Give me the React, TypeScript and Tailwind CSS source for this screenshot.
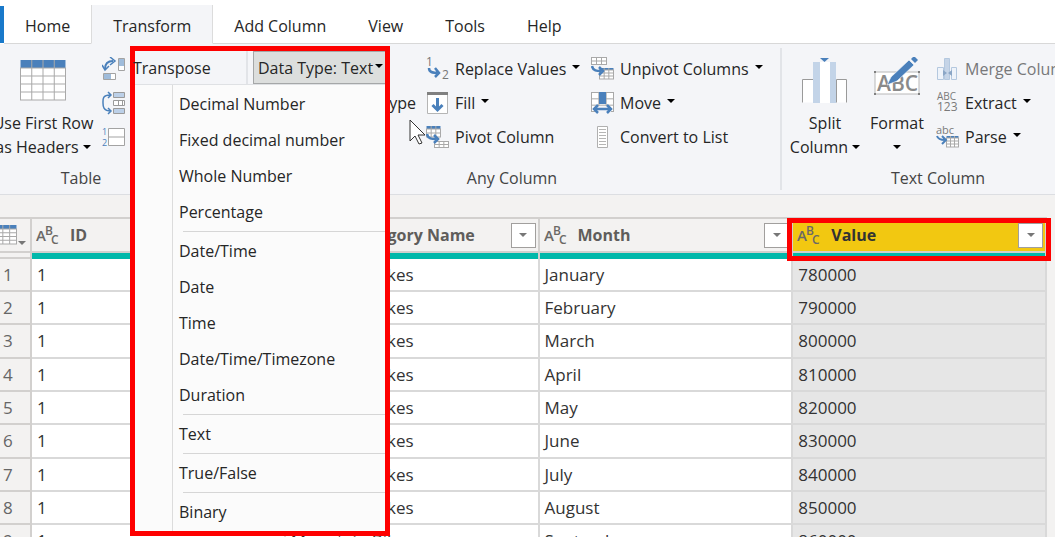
import { useState, type ReactNode } from 'react'
import clsx from 'clsx'

const tabs = ['Home', 'Transform', 'Add Column', 'View', 'Tools', 'Help']

const typeGroups = [
  ['Decimal Number', 'Fixed decimal number', 'Whole Number', 'Percentage'],
  ['Date/Time', 'Date', 'Time', 'Date/Time/Timezone', 'Duration'],
  ['Text'],
  ['True/False'],
  ['Binary'],
]

const rows = [
  ['January', '780000'],
  ['February', '790000'],
  ['March', '800000'],
  ['April', '810000'],
  ['May', '820000'],
  ['June', '830000'],
  ['July', '840000'],
  ['August', '850000'],
  ['September', '860000'],
]

function Caret({ className }: { className?: string }) {
  return (
    <svg className={clsx('inline-block h-1 w-2 shrink-0 align-middle', className)} viewBox="0 0 8 4" fill="currentColor" aria-hidden="true">
      <path d="M0 0h8L4 4z" />
    </svg>
  )
}

function Grid({ x, y, w, h, cols, lines, header }: { x: number; y: number; w: number; h: number; cols: number; lines: number; header?: number }) {
  const vertical = Array.from({ length: cols - 1 }, (_, i) => x + (w * (i + 1)) / cols)
  const top = header ?? 0
  const horizontal = Array.from({ length: lines - 1 }, (_, i) => y + top + ((h - top) * (i + 1)) / lines)
  return (
    <g>
      <rect x={x} y={y} width={w} height={h} fill="#fff" />
      {header && <rect x={x} y={y} width={w} height={header} fill="#4a80bb" />}
      <g stroke="#a9a9a9" fill="none">
        {vertical.map((v) => <path key={v} d={`M${v} ${y}V${y + h}`} />)}
        {horizontal.map((v) => <path key={v} d={`M${x} ${v}H${x + w}`} />)}
        <rect x={x} y={y + top} width={w} height={h - top} />
      </g>
    </g>
  )
}

function HeadersIcon() {
  return (
    <svg width="46" height="42" viewBox="0 0 46 42" aria-hidden="true">
      <Grid x={0.5} y={1} w={45} h={40} cols={4} lines={4} header={8} />
    </svg>
  )
}

function TransposeIcon() {
  return (
    <svg width="24" height="24" viewBox="0 0 24 24" fill="none" aria-hidden="true">
      <path d="M3 12C3 7 6 4 11 4" stroke="#4a80bb" strokeWidth="2" />
      <path d="M8 0l5 4-5 4M0 8l3 5 4-4" stroke="#4a80bb" strokeWidth="1.5" />
      <path d="M16.500 1.500h6v12h-6zM1.500 16.500h12v6h-12z" fill="#fff" stroke="#a3a3a3" />
      <path d="M17 2h5v7h-5zM2 17h7v5H2z" fill="#9fbcdb" />
    </svg>
  )
}

function ReverseIcon() {
  return (
    <svg width="24" height="24" viewBox="0 0 24 24" fill="none" aria-hidden="true">
      <path d="M8 4C0 4 1 9 1 12s0 8 8 8M6 1l3 3-3 3M6 17l3 3-3 3" stroke="#4a80bb" strokeWidth="1.500" />
      <path d="M11.500 1.500h11v5h-11zM11.500 17.500h11v5h-11z" fill="#bcd0e8" stroke="#9a9a9a" />
      <path d="M11.500 9.500h11v5h-11zM16.500 9.500v5M20.500 9.500v5" fill="#fff" stroke="#9a9a9a" />
    </svg>
  )
}

function CountIcon() {
  return (
    <svg width="24" height="24" viewBox="0 0 24 24" aria-hidden="true">
      <text x="0" y="10" fontSize="9" fill="#4a80bb">1</text>
      <text x="0" y="21" fontSize="9" fill="#4a80bb">2</text>
      <path d="M6.500 3.500h16v17h-16zM6.500 12h16" fill="#fff" stroke="#a3a3a3" />
    </svg>
  )
}

function ReplaceIcon() {
  return (
    <svg width="24" height="24" viewBox="0 0 24 24" fill="none" aria-hidden="true">
      <text x="0" y="9" fontSize="12" fill="#777">1</text>
      <text x="16" y="22" fontSize="12" fill="#777">2</text>
      <path d="M3 11c0 4 3 5 10 5M9 11l4 5-4 4" stroke="#4a80bb" strokeWidth="2.500" />
    </svg>
  )
}

function FillIcon() {
  return (
    <svg width="24" height="24" viewBox="0 0 24 24" fill="none" aria-hidden="true">
      <path d="M1.500 1.500h20v21h-20z" fill="#fff" stroke="#b5b5b5" />
      <path d="M1 1h21v3H1z" fill="#808080" />
      <path d="M11.500 7v12M6.500 14l5 5 5-5" stroke="#4a80bb" strokeWidth="3" />
    </svg>
  )
}

function PivotIcon() {
  return (
    <svg width="24" height="24" viewBox="0 0 24 24" fill="none" aria-hidden="true">
      <Grid x={0.5} y={1} w={14} h={11} cols={3} lines={2} header={3} />
      <Grid x={8.5} y={16.5} w={14} h={6} cols={3} lines={2} />
      <path d="M1 9c1 5 5 5 9 5M8 10l4 4-4 4" stroke="#4a80bb" strokeWidth="2.500" />
    </svg>
  )
}

function UnpivotIcon() {
  return (
    <svg width="24" height="24" viewBox="0 0 24 24" fill="none" aria-hidden="true">
      <Grid x={0.5} y={0.5} w={15} h={7} cols={3} lines={2} />
      <Grid x={8.500} y={11} w={14} h={11} cols={3} lines={3} header={2} />
      <path d="M1 9c1 5 5 5 9 5M8 10l4 4-4 4" stroke="#4a80bb" strokeWidth="2.500" />
    </svg>
  )
}

function MoveIcon() {
  return (
    <svg width="24" height="24" viewBox="0 0 24 24" fill="none" aria-hidden="true">
      <Grid x={0.5} y={1.500} w={22} h={19} cols={3} lines={3} />
      <path d="M8 1h7v12H8z" fill="#4a80bb" />
      <path d="M4 18h16" stroke="#f4f5f8" strokeWidth="6" />
      <path d="M3 18h17M7 14l-4 4 4 4M16 14l4 4-4 4" stroke="#4a80bb" strokeWidth="2.500" />
    </svg>
  )
}

function ListIcon() {
  return (
    <svg width="24" height="24" viewBox="0 0 24 24" fill="none" aria-hidden="true">
      <path d="M6.500 1.500h10v21h-10z" fill="#fff" stroke="#b0b0b0" />
      <path d="M8 4.500h7M8 7.500h7M8 10.500h7M8 13.500h7M8 16.500h7M8 19.500h7" stroke="#b5b5b5" />
    </svg>
  )
}

function SplitIcon() {
  return (
    <svg width="46" height="46" viewBox="0 0 46 46" aria-hidden="true">
      <path d="M.5 45.500V22.500h11v23M34.500 45.500V22.500h10v23" fill="#fff" stroke="#9a9a9a" />
      <path d="M11 5h7v41h-7zM28 5h6v41h-6z" fill="#c3d4e8" />
      <path d="M18 5h10v41H18z" fill="#fff" />
      <path d="M18 1h9l-4.500 4z" fill="#4a80bb" />
    </svg>
  )
}

function FormatIcon() {
  return (
    <svg width="48" height="46" viewBox="0 0 48 46" aria-hidden="true">
      <path d="M2 15h44v22H2z" fill="#fff" stroke="#b8b8b8" />
      <text x="4" y="34" fontSize="21" fontWeight="600" fill="#8a8a8a">ABC</text>
      <path d="M14 28l4-8L36 3l5 5-17 16z" fill="#4a80bb" stroke="#fff" strokeWidth=".6" />
      <path d="M38 2l3-3 4 4-3 3z" fill="#4a80bb" />
      <path d="M1 14h2v2H1zM45 14h2v2h-2zM1 36h2v2H1zM45 36h2v2h-2z" fill="#808080" />
    </svg>
  )
}

function MergeIcon() {
  return (
    <svg width="24" height="24" viewBox="0 0 24 24" aria-hidden="true">
      <path d="M1.500 22.500v-12h6v12zM15.500 22.500v-12h5v12z" fill="#eef3fa" stroke="#b4c8df" />
      <path d="M8.500 1.500h5v21h-5z" fill="#c5d4e7" stroke="#b4c8df" />
      <path d="M7 13l4 3-4 3zM16 13l-4 3 4 3z" fill="#8ba6c6" />
    </svg>
  )
}

function ExtractIcon() {
  return (
    <svg width="24" height="24" viewBox="0 0 24 24" fill="#7a7a7a" aria-hidden="true">
      <text x="1" y="9" fontSize="10">ABC</text>
      <text x="1" y="20" fontSize="12">123</text>
    </svg>
  )
}

function ParseIcon() {
  return (
    <svg width="24" height="24" viewBox="0 0 24 24" fill="none" aria-hidden="true">
      <text x="0" y="9" fontSize="11" fill="#7a7a7a">abc</text>
      <Grid x={10.500} y={11} w={12} h={11} cols={3} lines={3} header={2} />
      <path d="M1 11c1 3 4 4 8 4M6 11l4 4-4 4" stroke="#4a80bb" strokeWidth="2" />
    </svg>
  )
}

function TextTypeIcon() {
  return (
    <svg className="h-6 w-6 shrink-0" viewBox="0 0 24 24" fill="#6b6966" fontWeight="600" aria-hidden="true">
      <text x="0" y="18" fontSize="15">A</text>
      <text x="9" y="12" fontSize="12">B</text>
      <text x="15" y="21" fontSize="12">C</text>
    </svg>
  )
}

type SmallButtonProps = {
  icon: ReactNode
  label: string
  caret?: boolean
  disabled?: boolean
}

function SmallButton({ icon, label, caret, disabled }: SmallButtonProps) {
  return (
    <button disabled={disabled} className="flex h-[34px] items-center gap-[5px] whitespace-nowrap disabled:text-[#77787a]">
      {icon}
      <span>{label}</span>
      {caret && <Caret className="mb-1 ml-px text-black" />}
    </button>
  )
}

function RibbonGroup({ label, className, children }: { label: string; className: string; children: ReactNode }) {
  return (
    <section className={clsx('flex min-h-[142px] shrink-0 flex-col justify-between border-r-2 border-[#e2e4e8]', className)}>
      {children}
      <h2 className="text-center leading-6 text-[#444]">{label}</h2>
    </section>
  )
}

function Ribbon() {
  return (
    <div className="flex border-b border-[#dcdee2] bg-[#f4f5f8] py-1">
      <RibbonGroup label="Table" className="w-[248px] [&>h2]:mr-[84px]">
        <div className="flex gap-2">
          <button className="-ml-2 flex w-[102px] flex-col items-center gap-2.5 whitespace-nowrap pt-[11px] leading-6">
            <HeadersIcon />
            <span>Use First Row<br />as Headers <Caret className="mb-1 text-black" /></span>
          </button>
          <div className="flex flex-col pt-1">
            <button aria-label="Transpose" className="h-[34px]"><TransposeIcon /></button>
            <button aria-label="Reverse Rows" className="h-[34px]"><ReverseIcon /></button>
            <button aria-label="Count Rows" className="h-[34px]"><CountIcon /></button>
          </div>
        </div>
      </RibbonGroup>
      <RibbonGroup label="Any Column" className="w-[534px] [&>h2]:mr-1">
        <div className="grid grid-cols-[170px_165px_auto] pl-2 pt-1">
          <div className="flex flex-col items-end pr-2.5 pt-[34px]">
            <button className="h-[34px] whitespace-nowrap">Detect Data Type</button>
          </div>
          <div>
            <SmallButton icon={<ReplaceIcon />} label="Replace Values" caret />
            <SmallButton icon={<FillIcon />} label="Fill" caret />
            <SmallButton icon={<PivotIcon />} label="Pivot Column" />
          </div>
          <div>
            <SmallButton icon={<UnpivotIcon />} label="Unpivot Columns" caret />
            <SmallButton icon={<MoveIcon />} label="Move" caret />
            <SmallButton icon={<ListIcon />} label="Convert to List" />
          </div>
        </div>
      </RibbonGroup>
      <RibbonGroup label="Text Column" className="w-[314px]">
        <div className="flex pl-1">
          <button className="flex w-[78px] flex-col items-center gap-2 whitespace-nowrap pt-[9px] leading-6">
            <SplitIcon />
            <span>Split<br />Column <Caret className="mb-1 text-black" /></span>
          </button>
          <button className="flex w-[66px] flex-col items-center gap-2 pt-[9px] leading-6">
            <FormatIcon />
            <span>Format<br /><Caret className="mb-1 text-black" /></span>
          </button>
          <div className="pl-1.5 pt-1">
            <SmallButton icon={<MergeIcon />} label="Merge Columns" disabled />
            <SmallButton icon={<ExtractIcon />} label="Extract" caret />
            <SmallButton icon={<ParseIcon />} label="Parse" caret />
          </div>
        </div>
      </RibbonGroup>
    </div>
  )
}

function DataTypeMenu() {
  return (
    <div className="absolute left-[130px] top-[46px] z-10 w-[260px] border-5 border-[#fe0000] bg-[#fbfbfb]">
      <div className="flex h-[34px] justify-between border-b border-[#dfe1e4] bg-[#f4f5f8]">
        <button className="-ml-0.5 w-[115px] border-r-2 border-[#e2e4e8] text-left">Transpose</button>
        <button className="flex w-[132px] items-center gap-0.5 whitespace-nowrap border border-r-0 border-[#a5a7a8] bg-[#dcdedd] pl-1">
          Data Type: Text
          <Caret className="mb-1 text-black" />
        </button>
      </div>
      <div className="ml-[37px] border-l border-[#dcdcdc] py-px" role="menu">
        {typeGroups.map((group, i) => (
          <div key={group[0]}>
            {i > 0 && <hr className="my-px ml-2.5 border-[#d6d6d6]" />}
            {group.map((item) => (
              <button key={item} role="menuitem" className="block h-9 w-full pl-1.5 text-left">{item}</button>
            ))}
          </div>
        ))}
      </div>
    </div>
  )
}

function ColumnHeader({ name, selected }: { name: string; selected?: boolean }) {
  return (
    <th className="relative p-0 text-left font-bold">
      <div className={clsx('flex h-8 items-center border-r-2 border-[#d2d0ce] pl-1 pr-0.5', selected ? 'bg-[#f2c811] text-[#333]' : 'bg-[#f3f2f1] text-[#5f5d5b]')}>
        <TextTypeIcon />
        <span className="ml-2.5 grow">{name}</span>
        <button aria-label={`Filter ${name}`} className="flex size-[25px] items-center justify-center border border-[#a19f9d] bg-white text-[#777]">
          <Caret />
        </button>
      </div>
      <div className="h-2 border-r-2 border-t-2 border-[#d2d0ce] bg-[#01b8aa]" />
      {selected && <div className="pointer-events-none absolute -bottom-0.5 -left-1.5 -right-1 -top-px border-5 border-[#fe0000]" />}
    </th>
  )
}

function PreviewTable() {
  const cell = 'border-b-2 border-r-2 border-[#d9d9d9] px-[5px] py-0'
  return (
    <table className="w-[1047px] table-fixed border-separate border-spacing-0 border-t-2 border-[#d2d0ce] text-[#333]">
      <colgroup>
        <col className="w-8" />
        <col span={4} />
      </colgroup>
      <thead>
        <tr>
          <th className="p-0">
            <div className="flex h-8 items-center border-r-2 border-[#d2d0ce]">
              <button aria-label="Table options" className="flex items-end text-[#777]">
                <svg width="17" height="20" viewBox="0 0 17 20" aria-hidden="true">
                  <Grid x={-4} y={0} w={20.500} h={19} cols={3} lines={4} header={4} />
                </svg>
                <Caret className="ml-px" />
              </button>
            </div>
            <div className="h-2 border-y-2 border-r-2 border-[#d2d0ce]" />
          </th>
          <ColumnHeader name="ID" />
          <ColumnHeader name="Subcategory Name" />
          <ColumnHeader name="Month" />
          <ColumnHeader name="Value" selected />
        </tr>
      </thead>
      <tbody className="text-[17px]">
        {rows.map(([month, value], i) => (
          <tr key={month} className="h-[33px] bg-white nth-[3n]:h-[34px]">
            <td className="border-b-2 border-r-2 border-[#d2d0ce] bg-[#f3f2f1] px-[3px] py-0 text-[#666]">{i + 1}</td>
            <td className={cell}>1</td>
            <td className={cell}>Mountain Bikes</td>
            <td className={cell}>{month}</td>
            <td className={clsx(cell, 'bg-[#e6e6e6]')}>{value}</td>
          </tr>
        ))}
      </tbody>
    </table>
  )
}

export default function App() {
  const [active, setActive] = useState('Transform')

  return (
    <div className="relative h-screen overflow-hidden bg-[#f3f2f1] font-['Open_Sans','Noto_Sans',sans-serif] text-base leading-6 text-[#262626]">
      <nav className="flex bg-white pt-[5px]">
        <div className="my-px w-1 bg-[#1979ca]" />
        {tabs.map((tab) => (
          <button
            key={tab}
            onClick={() => setActive(tab)}
            className={clsx(
              'h-[39px] border-b px-[21px] pt-1',
              tab === active ? 'border-x border-b-[#f4f5f8] border-x-[#dcdcdc] bg-[#f4f5f8]' : 'border-[#d8d8d8]',
            )}
          >
            {tab}
          </button>
        ))}
        <div className="grow border-b border-[#d8d8d8]" />
      </nav>
      <Ribbon />
      <main className="pt-[22px]">
        <PreviewTable />
      </main>
      <DataTypeMenu />
      <svg className="absolute left-[409px] top-[119px] z-20 h-[27px] w-[18px]" viewBox="0 0 18 27" aria-hidden="true">
        <path d="M1 1v21l5-5 4 8 3-1-4-8h7z" fill="#fff" stroke="#333" />
      </svg>
    </div>
  )
}
